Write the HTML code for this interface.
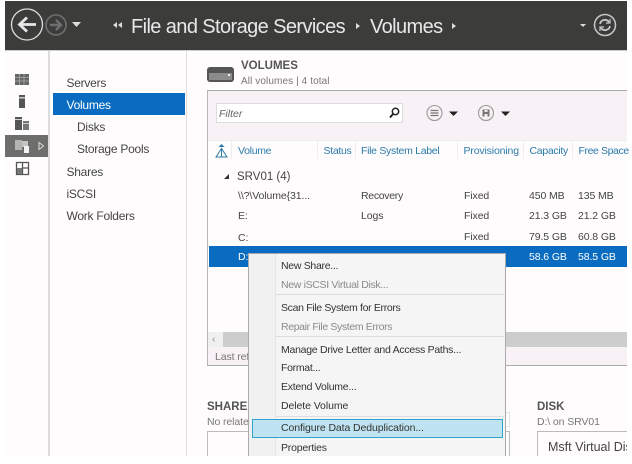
<!DOCTYPE html>
<html><head><meta charset="utf-8"><style>
html,body{margin:0;padding:0;background:#fff}
#r{position:relative;width:632px;height:464px;overflow:hidden;background:#fff;font-family:"Liberation Sans",sans-serif;filter:blur(.3px)}
#r div{position:absolute}
.t{white-space:nowrap;font-size:10.5px;line-height:14px;color:#444;letter-spacing:-.1px}
.n{font-size:12px;color:#444;line-height:16px;white-space:nowrap;letter-spacing:-.25px}
.h{font-size:10.5px;color:#2a7ba8;line-height:14px;white-space:nowrap;letter-spacing:-.3px}
.m{font-size:10.5px;color:#333;line-height:14px;white-space:nowrap;left:281px}
.g{color:#8a8a8a}
</style></head><body><div id="r">
<div style="left:5px;top:1px;width:622px;height:455px;background:#fffcfe"></div>
<div style="left:5px;top:1px;width:622px;height:49px;background:#3c3c3b"></div>
<div style="left:5px;top:50px;width:622px;height:1px;background:#ccc"></div>
<div style="left:48px;top:51px;width:2px;height:405px;background:#dcdcdc"></div>
<div style="left:186px;top:51px;width:1px;height:405px;background:#ddd"></div>
<div style="left:5px;top:135px;width:43px;height:22px;background:#6e6e6c"></div>

<svg style="position:absolute;left:0;top:0" width="632" height="200" viewBox="0 0 632 200">
<circle cx="27" cy="24.500" r="15.500" fill="none" stroke="#dedede" stroke-width="1.300"/>
<path d="M36 24.500H20M27 17.500L19.500 24.500L27 31.500" fill="none" stroke="#e8e8e8" stroke-width="2.800"/>
<circle cx="56" cy="25" r="10" fill="none" stroke="#6f6f6f" stroke-width="1.600"/>
<path d="M50 25H61M56 20L61 25L56 30" fill="none" stroke="#6f6f6f" stroke-width="2.400"/>
<path d="M72 22H81L76.500 27Z" fill="#ddd"/>
<path d="M117 22V28L113 25ZM122 22V28L118 25Z" fill="#ddd"/>
<path d="M356 23V29L360 26Z" fill="#ddd"/><path d="M452 23V29L456 26Z" fill="#ddd"/>
<path d="M580 24H586L583 27Z" fill="#ddd"/>
<circle cx="605" cy="25" r="10.500" fill="none" stroke="#c8c8c8" stroke-width="1.500"/>
<path d="M600 24A5 5 0 0 1 609 22M610 26A5 5 0 0 1 601 28" fill="none" stroke="#ccc" stroke-width="1.700"/>
<path d="M610 19V23H606M600 31V27H604" fill="none" stroke="#ccc" stroke-width="1.200"/>
<rect x="15" y="74" width="14" height="11" fill="#666"/>
<path d="M15 77.500H29M15 81H29M19.500 74V85M24 74V85" stroke="#aaa" stroke-width=".8"/>
<rect x="19" y="95" width="6" height="13" fill="#555"/><rect x="19" y="97" width="6" height="1.500" fill="#ccc"/>
<rect x="15" y="117" width="7" height="13" fill="#555"/><rect x="23" y="121" width="6" height="9" fill="#777"/><rect x="15" y="119" width="7" height="1" fill="#ccc"/><rect x="23" y="123" width="6" height="1" fill="#ccc"/>
<rect x="15" y="140" width="7" height="10" fill="#b4b4b2"/><rect x="22" y="141" width="6" height="6" fill="#c4c4c2"/><rect x="24" y="146" width="5" height="7" fill="#f2f2f2"/>
<path d="M39 142.500L43.500 146L39 149.500Z" fill="none" stroke="#ddd"/>
<path d="M16.500 162.500h12v12h-12zM22.500 162.500v12M22.500 168h6" fill="none" stroke="#555" stroke-width="1.300"/>
<rect x="17" y="168" width="5" height="6" fill="#777"/>
</svg>

<div style="left:53px;top:93px;width:132px;height:22px;background:#0a6cc0"></div>
<div class="n" style="left:66.500px;top:75px">Servers</div>
<div class="n" style="left:66.500px;top:97px;color:#fff">Volumes</div>
<div class="n" style="left:77px;top:119px">Disks</div>
<div class="n" style="left:77px;top:141px">Storage Pools</div>
<div class="n" style="left:66.500px;top:164px">Shares</div>
<div class="n" style="left:66.500px;top:186px">iSCSI</div>
<div class="n" style="left:66.500px;top:208px">Work Folders</div>

<svg style="position:absolute;left:205px;top:64px" width="30" height="20"><rect x="2" y="3" width="27" height="15" rx="3" fill="#555"/><rect x="4" y="9" width="23" height="7" fill="#8c8c8c"/><rect x="23" y="10" width="2" height="2" fill="#eee"/></svg>
<div style="left:241px;top:59px;font-size:11.500px;line-height:15px;font-weight:bold;color:#555">VOLUMES</div>
<div class="t" style="left:241px;top:75px;color:#777;font-size:10px;letter-spacing:.1px">All volumes | 4 total</div>

<div style="left:207px;top:90px;width:420px;height:1px;background:#aaa"></div>
<div style="left:207px;top:90px;width:1px;height:275px;background:#b5b5b5"></div>
<div style="left:208px;top:91px;width:419px;height:49px;background:#f8f1f5"></div>
<div style="left:216px;top:103px;width:187px;height:20px;background:#fff;border:1px solid #ddd;box-sizing:border-box"></div>
<div style="left:219px;top:107px;font-size:10.500px;line-height:14px;font-style:italic;color:#666">Filter</div>
<svg style="position:absolute;left:388px;top:106px" width="14" height="14"><circle cx="7.500" cy="5.500" r="3.200" fill="none" stroke="#222" stroke-width="1.500"/><path d="M5 8L2 11.500" stroke="#222" stroke-width="2"/></svg>
<svg style="position:absolute;left:425px;top:102px" width="90" height="22"><circle cx="9.500" cy="11" r="7.500" fill="none" stroke="#999" stroke-width="1.100"/><path d="M5.500 8.500h8M5.500 11h8M5.500 13.500h8" stroke="#777" stroke-width="1.300"/><path d="M24 9.500h9L28.500 14Z" fill="#222"/><circle cx="61" cy="11" r="7.500" fill="none" stroke="#999" stroke-width="1.100"/><rect x="57.500" y="7.500" width="7" height="7" fill="#777"/><rect x="59.500" y="8" width="3" height="2" fill="#eee"/><rect x="59.500" y="12" width="3" height="2.500" fill="#eee"/><path d="M76 9.500h9L80.500 14Z" fill="#222"/></svg>

<div style="left:208px;top:140px;width:419px;height:1px;background:#eee"></div>
<svg style="position:absolute;left:214px;top:142px" width="16" height="16"><path d="M7.500 6.500L2 15H13Z" fill="none" stroke="#2a7ba8" stroke-width="1"/><path d="M7.500 6.500V15" stroke="#2a7ba8"/><path d="M4.500 5L7.500 2L10.500 5Z" fill="#2a7ba8"/></svg>
<div class="h" style="left:238px;top:144px">Volume</div>
<div class="h" style="left:323.500px;top:144px">Status</div>
<div class="h" style="left:361px;top:144px">File System Label</div>
<div class="h" style="left:463.500px;top:144px;letter-spacing:-.15px">Provisioning</div>
<div class="h" style="left:529.500px;top:144px">Capacity</div>
<div class="h" style="left:578.500px;top:144px;letter-spacing:-.4px">Free Space</div>
<div style="left:231px;top:141px;width:1px;height:18px;background:#eee"></div>
<div style="left:317px;top:141px;width:1px;height:18px;background:#eee"></div>
<div style="left:355px;top:141px;width:1px;height:18px;background:#eee"></div>
<div style="left:457px;top:141px;width:1px;height:18px;background:#eee"></div>
<div style="left:523px;top:141px;width:1px;height:18px;background:#eee"></div>
<div style="left:572px;top:141px;width:1px;height:18px;background:#eee"></div>
<svg style="position:absolute;left:222px;top:172px" width="10" height="10"><path d="M7 2V7H2Z" fill="#333"/></svg>
<div class="n" style="left:237px;top:169px;font-size:11.500px;letter-spacing:0">SRV01 (4)</div>
<div class="t" style="left:238px;top:189px">\\?\Volume{31...</div>
<div class="t" style="left:361px;top:189px;letter-spacing:-.3px">Recovery</div>
<div class="t" style="left:464px;top:189px">Fixed</div>
<div class="t" style="left:529px;top:189px">450 MB</div>
<div class="t" style="left:578px;top:189px">135 MB</div>
<div class="t" style="left:238px;top:209px">E:</div>
<div class="t" style="left:361px;top:209px">Logs</div>
<div class="t" style="left:464px;top:209px">Fixed</div>
<div class="t" style="left:529px;top:209px">21.3 GB</div>
<div class="t" style="left:578px;top:209px">21.2 GB</div>
<div class="t" style="left:238px;top:231px">C:</div>
<div class="t" style="left:464px;top:230px">Fixed</div>
<div class="t" style="left:529px;top:230px">79.5 GB</div>
<div class="t" style="left:578px;top:230px">60.8 GB</div>
<div style="left:209px;top:246px;width:418px;height:21px;background:#0a6cc0"></div>
<div class="t" style="left:238px;top:250px;color:#fff">D:</div>
<div class="t" style="left:529px;top:250px;color:#fff">58.6 GB</div>
<div class="t" style="left:578px;top:250px;color:#fff">58.5 GB</div>

<div style="left:208px;top:332px;width:419px;height:15px;background:#f1f0f0"></div>
<div style="left:223px;top:332px;width:404px;height:15px;background:#cdcdcd"></div>
<div style="left:212px;top:334px;font-size:10px;line-height:12px;color:#888">&#8249;</div>
<div style="left:208px;top:347px;width:419px;height:18px;background:#f8f1f5"></div>
<div style="left:207px;top:365px;width:420px;height:1px;background:#aaa"></div>
<div class="t" style="left:215px;top:350px;color:#777">Last refreshed</div>

<div style="left:207px;top:400px;font-size:11.500px;line-height:15px;font-weight:bold;color:#555">SHARES</div>
<div class="t" style="left:207px;top:415px;color:#777">No related shares</div>
<div style="left:400px;top:412px;width:110px;height:15px;border:1px solid #e4e4e4;box-sizing:border-box"></div>
<div style="left:207px;top:431px;width:303px;height:25px;border:1px solid #bbb;box-sizing:border-box;border-bottom:0"></div>
<div style="left:537px;top:400px;font-size:11.500px;line-height:15px;font-weight:bold;color:#555">DISK</div>
<div class="t" style="left:537px;top:415px;color:#777">D:\ on SRV01</div>
<div style="left:537px;top:431px;width:90px;height:25px;border:1px solid #bbb;border-right:0;border-bottom:0;box-sizing:border-box"></div>
<div style="left:548px;top:439px;font-size:12.500px;line-height:16px;color:#444;white-space:nowrap;width:79px;overflow:hidden">Msft Virtual Disk</div>

<div style="left:248px;top:253px;width:258px;height:203px;background:#f5f5f5;border:1px solid #a9a9a9;border-bottom:0;box-sizing:border-box"></div>
<div style="left:249px;top:254px;width:26px;height:202px;background:#f1f1f1"></div>
<div style="left:275px;top:254px;width:1px;height:202px;background:#e4e4e4"></div>
<div style="left:276px;top:294px;width:228px;height:1px;background:#ddd"></div>
<div style="left:276px;top:336px;width:228px;height:1px;background:#ddd"></div>
<div style="left:276px;top:416px;width:228px;height:1px;background:#ddd"></div>
<div style="left:252px;top:419px;width:251px;height:19px;background:#bfe3f0;border:1px solid #2ea3cf;box-sizing:border-box"></div>
<div class="m" style="top:259px;letter-spacing:-.3px">New Share...</div>
<div class="m g" style="top:278px;letter-spacing:-.33px">New iSCSI Virtual Disk...</div>
<div class="m" style="top:301px;letter-spacing:-.33px">Scan File System for Errors</div>
<div class="m g" style="top:320px;letter-spacing:-.36px">Repair File System Errors</div>
<div class="m" style="top:343px;letter-spacing:-.26px">Manage Drive Letter and Access Paths...</div>
<div class="m" style="top:361px;letter-spacing:-.3px">Format...</div>
<div class="m" style="top:380px;letter-spacing:-.25px">Extend Volume...</div>
<div class="m" style="top:399px;letter-spacing:-.08px">Delete Volume</div>
<div class="m" style="top:421px;letter-spacing:-.1px">Configure Data Deduplication...</div>
<div class="m" style="top:441px;letter-spacing:-.2px">Properties</div>

<div style="left:131px;top:14px;font-size:20px;line-height:26px;color:#e8e8e8;white-space:nowrap;letter-spacing:-.6px">File and Storage Services</div>
<div style="left:370px;top:14px;font-size:20px;line-height:26px;color:#e8e8e8;white-space:nowrap;letter-spacing:-.6px">Volumes</div>
<div style="left:0;top:456px;width:632px;height:8px;background:#fff"></div>
</div></body></html>
